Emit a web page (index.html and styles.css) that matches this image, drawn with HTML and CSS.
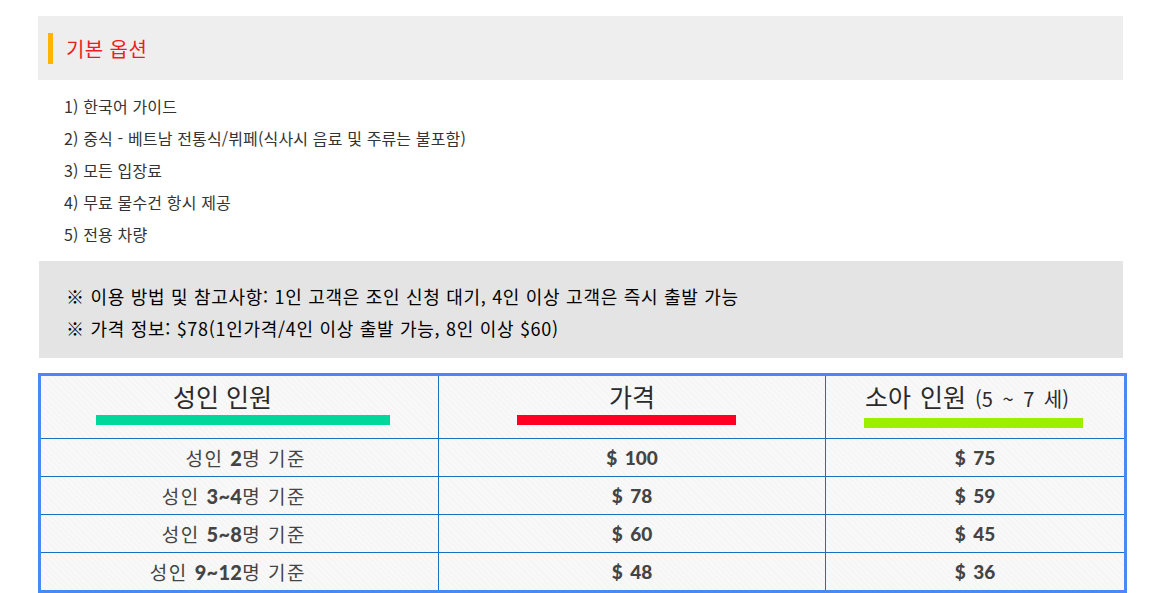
FILE: index.html
```html
<!DOCTYPE html>
<html lang="ko">
<head>
    <meta charset="UTF-8">
    <meta name="viewport" content="width=device-width, initial-scale=1.0">
    <title>기본 옵션</title>
    <link rel="stylesheet" href="styles.css">
</head>
<body>
    <div class="wrap">
        <div class="section-head">
            <h2 class="section-title">기본 옵션</h2>
        </div>

        <ul class="option-list">
            <li>1) 한국어 가이드</li>
            <li>2) 중식 - 베트남 전통식/뷔페(식사시 음료 및 주류는 불포함)</li>
            <li>3) 모든 입장료</li>
            <li>4) 무료 물수건 항시 제공</li>
            <li>5) 전용 차량</li>
        </ul>

        <div class="notice">
            <p>※ 이용 방법 및 참고사항: 1인 고객은 조인 신청 대기, 4인 이상 고객은 즉시 출발 가능</p>
            <p>※ 가격 정보: $78(1인가격/4인 이상 출발 가능, 8인 이상 $60)</p>
        </div>

        <table class="price-table">
            <colgroup>
                <col class="col-people">
                <col class="col-price">
                <col class="col-child">
            </colgroup>
            <thead>
                <tr>
                    <th>
                        <div class="th-label th-label-left">성인 인원</div>
                        <span class="th-bar bar-green"></span>
                    </th>
                    <th>
                        <div class="th-label">가격</div>
                        <span class="th-bar bar-red"></span>
                    </th>
                    <th>
                        <div class="th-label th-label-right">소아 인원 <small>(5 ~ 7 세)</small></div>
                        <span class="th-bar bar-lime"></span>
                    </th>
                </tr>
            </thead>
            <tbody>
                <tr>
                    <td class="people">성인 <b>2</b>명 기준</td>
                    <td class="price">$ 100</td>
                    <td class="price">$ 75</td>
                </tr>
                <tr>
                    <td class="people">성인 <b>3~4</b>명 기준</td>
                    <td class="price">$ 78</td>
                    <td class="price">$ 59</td>
                </tr>
                <tr>
                    <td class="people">성인 <b>5~8</b>명 기준</td>
                    <td class="price">$ 60</td>
                    <td class="price">$ 45</td>
                </tr>
                <tr>
                    <td class="people">성인 <b>9~12</b>명 기준</td>
                    <td class="price">$ 48</td>
                    <td class="price">$ 36</td>
                </tr>
            </tbody>
        </table>
    </div>
</body>
</html>
```

FILE: styles.css
```css
body, html {
    margin: 0;
    padding: 0;
    background-color: #fff;
    font-family: "Noto Sans CJK KR", "Noto Sans", sans-serif;
}

.wrap {
    width: 1089px;
    margin-left: 38px;
    padding-top: 16px;
}

.section-head {
    width: 1085px;
    height: 64px;
    background-color: #eeeeee;
    display: flex;
    align-items: center;
}

.section-title {
    margin: 0 0 0 10px;
    padding-left: 13px;
    border-left: 5px solid #ffb400;
    color: #ee1c1c;
    font-size: 20px;
    letter-spacing: 0.4px;
    font-weight: normal;
    line-height: 31px;
    height: 31px;
}

.option-list {
    list-style: none;
    margin: 10px 0 11px;
    padding: 0 0 0 26px;
}

.option-list li {
    font-size: 16px;
    letter-spacing: 0.15px;
    line-height: 32px;
    color: #333;
}

.notice {
    width: 1057px;
    margin-left: 1px;
    padding: 19px 0 14px 27px;
    background-color: #e4e4e4;
}

.notice p {
    margin: 0;
    font-size: 18px;
    letter-spacing: 0.7px;
    line-height: 32px;
    color: #000;
}

.price-table {
    width: 1089px;
    margin-top: 15px;
    border-collapse: collapse;
    table-layout: fixed;
    border: 3px solid #4a88f2;
    background-color: #f7f7f7;
    background-image: repeating-linear-gradient(45deg, rgba(0, 0, 0, 0.008) 0 2px, rgba(255, 255, 255, 0.25) 2px 4px);
    color: #444;
}

.col-people { width: 399px; }
.col-price { width: 387px; }

.price-table th,
.price-table td {
    border: 1px solid #1a6ec4;
    padding: 0;
}

.price-table th {
    height: 62px;
    text-align: center;
    vertical-align: top;
    font-weight: normal;
}

.th-label {
    font-size: 25px;
    line-height: 28px;
    color: #2a2a2a;
    margin-top: 6px;
}

.th-label-left {
    padding-right: 34px;
}

.th-label-right {
    padding-right: 16px;
    word-spacing: 2px;
}

.th-label small {
    font-size: 20px;
    word-spacing: 4px;
}

.th-bar {
    display: inline-block;
    height: 10px;
    margin-top: 5px;
    vertical-align: top;
}

.bar-green {
    width: 294px;
    margin-left: 6px;
    background-color: #00d89b;
}

.bar-red {
    width: 219px;
    margin-right: 12px;
    background-color: #ff0022;
}

.bar-lime {
    width: 219px;
    margin-right: 4px;
    background-color: #99f000;
}

.price-table td {
    height: 37px;
    font-size: 19px;
}

.people {
    text-align: right;
    padding-right: 132px !important;
    letter-spacing: 1.5px;
}

.people b {
    font-family: "Lato", "Liberation Sans", sans-serif;
    font-weight: 900;
    font-size: 20px;
    letter-spacing: 0.3px;
}

.price {
    text-align: center;
    font-family: "Lato", "Liberation Sans", sans-serif;
    font-weight: 900;
    font-size: 21px;
    word-spacing: 3px;
}
```
